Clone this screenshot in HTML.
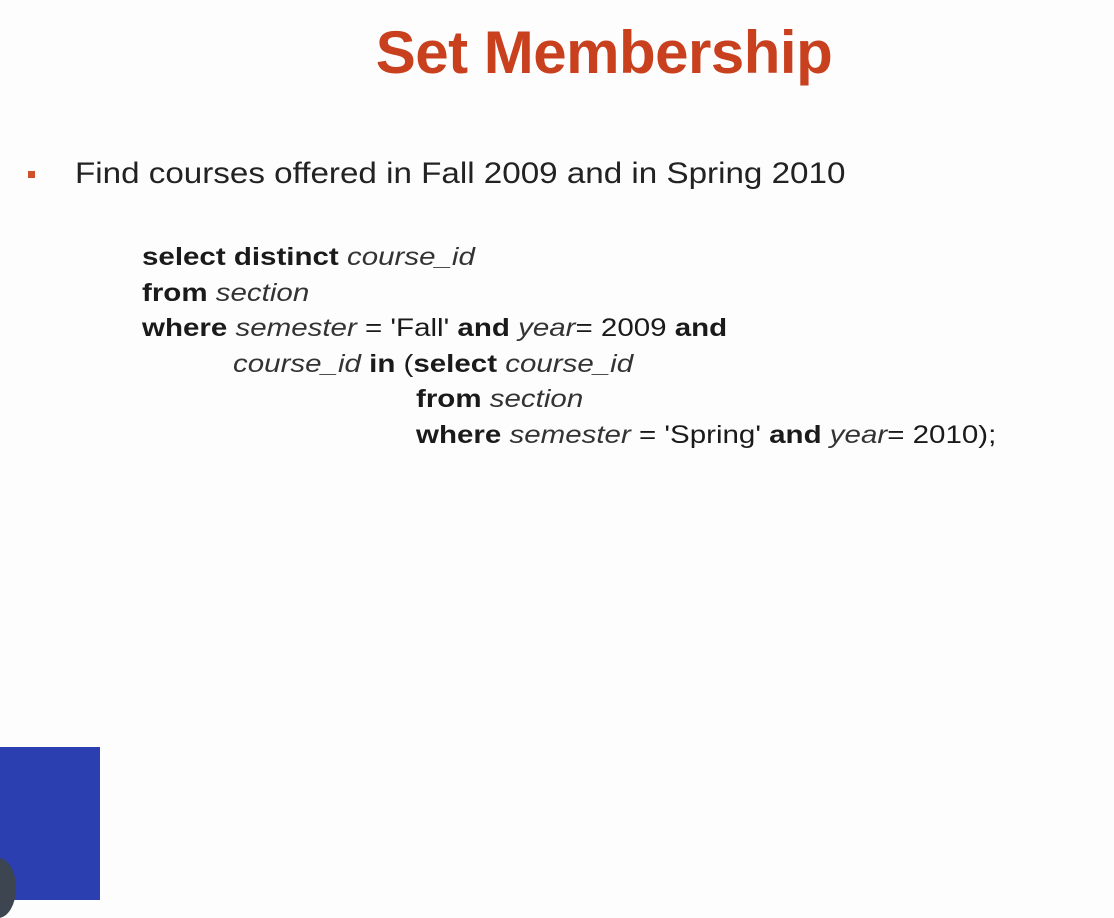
<!DOCTYPE html>
<html><head><meta charset="utf-8"><style>
body{margin:0;width:1114px;height:900px;background:#fdfdfd;position:relative;overflow:hidden;font-family:"Liberation Sans",sans-serif;color:#1a1a1a}
.t{position:absolute;left:0;width:1208px;text-align:center;top:18px;font-size:60px;font-weight:bold;color:#c8401e;letter-spacing:-0.5px}
.b{position:absolute;left:75px;top:157px;font-size:30px;color:#222;transform:scaleX(1.106);transform-origin:left}
.dot{position:absolute;left:28px;top:171px;width:7px;height:7px;background:#d0502a}
.c{position:absolute;font-size:25px;white-space:nowrap;color:#1a1a1a;transform:scaleX(1.18);transform-origin:left}
.c b{font-weight:bold}.c i{color:#333}
.blue{position:absolute;left:0;top:747px;width:100px;height:153px;background:#2b3fb0}
.fig{position:absolute;left:-20px;top:858px;width:36px;height:60px;border-radius:50%;background:#3d4550}
</style></head><body>
<div class="t">Set Membership</div>
<div class="dot"></div>
<div class="b">Find courses offered in Fall 2009 and in Spring 2010</div>
<div class="c" style="left:142px;top:243px"><b>select distinct</b> <i>course_id</i></div>
<div class="c" style="left:142px;top:279px"><b>from</b> <i>section</i></div>
<div class="c" style="left:142px;top:314px"><b>where</b> <i>semester</i> = 'Fall' <b>and</b> <i>year</i>= 2009 <b>and</b></div>
<div class="c" style="left:233px;top:350px"><i>course_id</i> <b>in</b> (<b>select</b> <i>course_id</i></div>
<div class="c" style="left:416px;top:385px"><b>from</b> <i>section</i></div>
<div class="c" style="left:416px;top:421px"><b>where</b> <i>semester</i> = 'Spring' <b>and</b> <i>year</i>= 2010);</div>
<div class="blue"></div><div class="fig"></div>
</body></html>
